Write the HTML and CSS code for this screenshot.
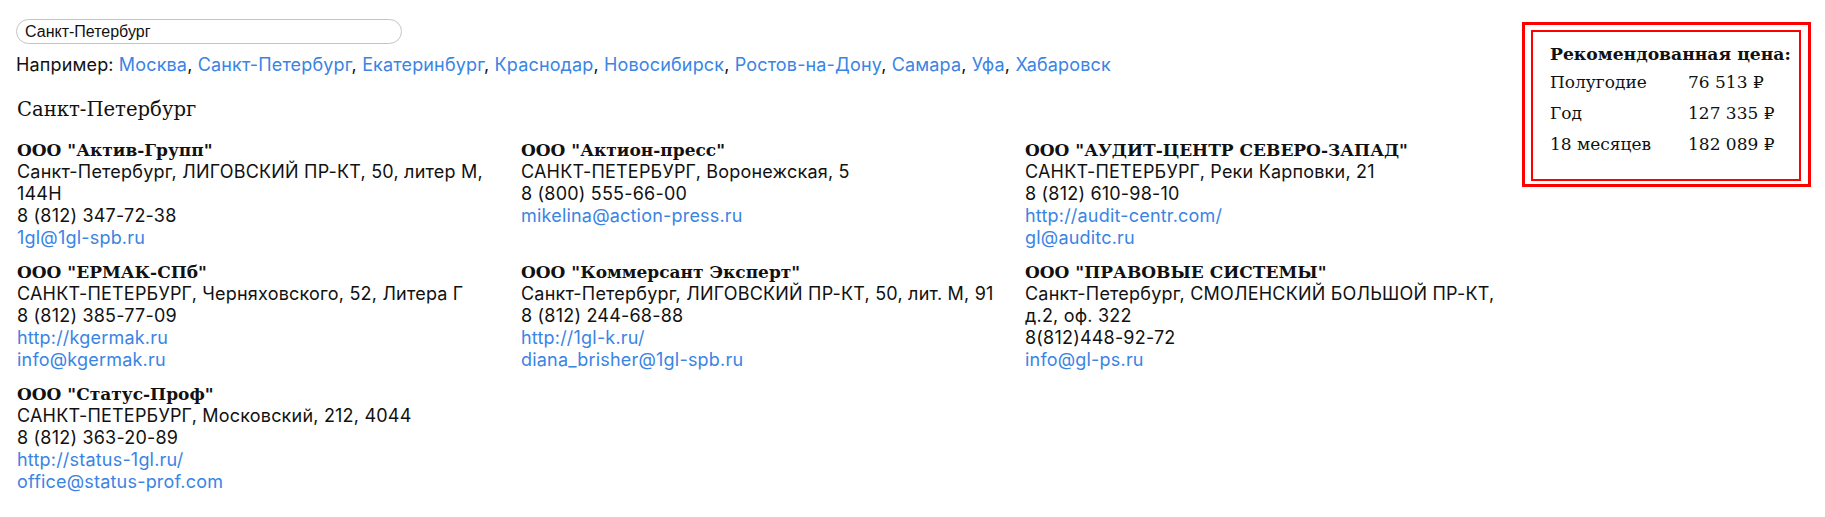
FILE: index.html
```html
<!DOCTYPE html>
<html lang="ru">
<head>
<meta charset="utf-8">
<title>Дилеры</title>
<link rel="stylesheet" href="styles.css">
</head>
<body>
<div class="page">
  <div class="main">
    <input class="city-input" type="text" value="Санкт-Петербург">
    <div class="examples">Например: <a href="#">Москва</a>, <a href="#">Санкт-Петербург</a>, <a href="#">Екатеринбург</a>, <a href="#">Краснодар</a>, <a href="#">Новосибирск</a>, <a href="#">Ростов-на-Дону</a>, <a href="#">Самара</a>, <a href="#">Уфа</a>, <a href="#">Хабаровск</a></div>
    <h2 class="city-title">Санкт-Петербург</h2>
    <div class="dealers">
      <div class="dealer">
        <div class="dealer-name">ООО "Актив-Групп"</div>
        <div>Санкт-Петербург, ЛИГОВСКИЙ ПР-КТ, 50, литер М, 144Н</div>
        <div>8 (812) 347-72-38</div>
        <a href="#">1gl@1gl-spb.ru</a>
      </div>
      <div class="dealer">
        <div class="dealer-name">ООО "Актион-пресс"</div>
        <div>САНКТ-ПЕТЕРБУРГ, Воронежская, 5</div>
        <div>8 (800) 555-66-00</div>
        <a href="#">mikelina@action-press.ru</a>
      </div>
      <div class="dealer">
        <div class="dealer-name">ООО "АУДИТ-ЦЕНТР СЕВЕРО-ЗАПАД"</div>
        <div>САНКТ-ПЕТЕРБУРГ, Реки Карповки, 21</div>
        <div>8 (812) 610-98-10</div>
        <a href="#">http://audit-centr.com/</a>
        <a href="#">gl@auditc.ru</a>
      </div>
      <div class="dealer">
        <div class="dealer-name">ООО "ЕРМАК-СПб"</div>
        <div>САНКТ-ПЕТЕРБУРГ, Черняховского, 52, Литера Г</div>
        <div>8 (812) 385-77-09</div>
        <a href="#">http://kgermak.ru</a>
        <a href="#">info@kgermak.ru</a>
      </div>
      <div class="dealer">
        <div class="dealer-name">ООО "Коммерсант Эксперт"</div>
        <div>Санкт-Петербург, ЛИГОВСКИЙ ПР-КТ, 50, лит. М, 91</div>
        <div>8 (812) 244-68-88</div>
        <a href="#">http://1gl-k.ru/</a>
        <a href="#">diana_brisher@1gl-spb.ru</a>
      </div>
      <div class="dealer">
        <div class="dealer-name">ООО "ПРАВОВЫЕ СИСТЕМЫ"</div>
        <div>Санкт-Петербург, СМОЛЕНСКИЙ БОЛЬШОЙ ПР-КТ, д.2, оф. 322</div>
        <div>8(812)448-92-72</div>
        <a href="#">info@gl-ps.ru</a>
      </div>
      <div class="dealer">
        <div class="dealer-name">ООО "Статус-Проф"</div>
        <div>САНКТ-ПЕТЕРБУРГ, Московский, 212, 4044</div>
        <div>8 (812) 363-20-89</div>
        <a href="#">http://status-1gl.ru/</a>
        <a href="#">office@status-prof.com</a>
      </div>
    </div>
  </div>
  <aside class="price-outer">
    <div class="price-inner">
      <div class="price-title">Рекомендованная цена:</div>
      <div class="price-row"><span class="price-label">Полугодие</span><span>76 513 ₽</span></div>
      <div class="price-row"><span class="price-label">Год</span><span>127 335 ₽</span></div>
      <div class="price-row"><span class="price-label">18 месяцев</span><span>182 089 ₽</span></div>
    </div>
  </aside>
</div>
</body>
</html>
```

FILE: styles.css
```css
html, body {
  margin: 0;
  padding: 0;
  background: #fff;
  color: #111;
}
a {
  color: #3a84e4;
  text-decoration: none;
}
.page {
  display: flex;
  align-items: flex-start;
  padding: 0 14px 0 16px;
}
.main {
  flex: 1;
  min-width: 0;
  padding-top: 19px;
  font-family: "Inter", "Open Sans", sans-serif;
}
.city-input {
  display: block;
  box-sizing: border-box;
  width: 386px;
  height: 25px;
  margin: 0;
  padding: 0 8px;
  border: 1px solid #c4c4c4;
  border-radius: 13px;
  font-family: "Liberation Sans", Arial, sans-serif;
  font-size: 16px;
  color: #111;
  outline: none;
}
.examples {
  margin-top: 10px;
  font-size: 18px;
  letter-spacing: 0.15px;
  line-height: 22px;
}
.city-title {
  margin: 21px 0 0 1px;
  font-family: "DejaVu Serif", serif;
  font-weight: normal;
  font-size: 19.6px;
  line-height: 26px;
}
.dealers {
  display: grid;
  grid-template-columns: 504px 504px minmax(0, 1fr);
  margin-top: 16px;
  margin-left: 1px;
  row-gap: 12px;
}
.dealer {
  display: flex;
  flex-direction: column;
  align-items: flex-start;
  padding-right: 12px;
  font-size: 18px;
  letter-spacing: 0.2px;
  line-height: 22px;
}
.dealer-name {
  font-family: "DejaVu Serif", serif;
  font-weight: bold;
  font-size: 17px;
  letter-spacing: 0;
}
.price-outer {
  flex: none;
  width: 289px;
  box-sizing: border-box;
  margin-top: 22px;
  border: 3px solid #f00;
  padding: 5px 7px 3px 6px;
}
.price-inner {
  border: 2px solid #f00;
  padding: 9px 6px 19px 17px;
  font-family: "DejaVu Serif", serif;
  font-size: 17px;
}
.price-title {
  font-weight: bold;
  font-size: 17.2px;
  line-height: 26px;
  white-space: nowrap;
}
.price-row {
  display: flex;
  line-height: 31px;
}
.price-label {
  width: 138px;
}
```
